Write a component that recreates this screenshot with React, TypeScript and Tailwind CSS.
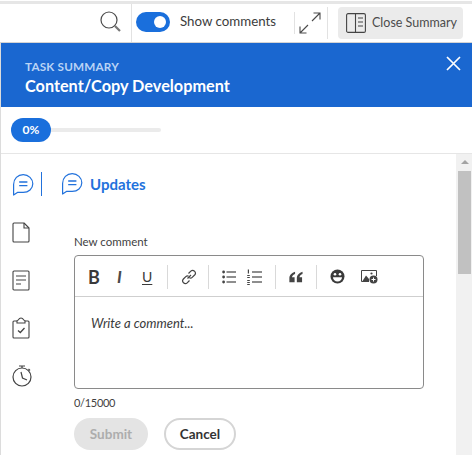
const BubbleIcon = () => (
  <svg width="22" height="23" viewBox="0 0 22 23" fill="none" stroke="#2272dc" strokeWidth="1.2">
    <path d="M1.6 22V11.5C1.6 5.8 5.8 1.6 11.2 1.6C16.6 1.6 20.8 5.8 20.8 10.8C20.8 15.8 16.6 19.4 11.2 19.4H5.4Z" strokeLinejoin="round" />
    <path d="M7.2 9H15.4M7.2 12.6H15.4" strokeWidth="1.4" />
  </svg>
);

const ToolDivider = () => <div className="w-px h-6 bg-[#d9d9d9]" />;

const ToolbarIcons = () => (
  <div className="flex items-center h-[41px] border-b border-[#cfcfcf] pl-[13px] pt-px text-[#3a3a3a]">
    <span className="w-[15px] text-[18px] font-bold leading-none">B</span>
    <span className="w-[9px] ml-[14px] text-[17px] italic font-bold leading-none text-[#4a4a4a]">I</span>
    <span className="ml-[16px] w-[13px] text-[14px] leading-none underline underline-offset-2">U</span>
    <div className="ml-[12px]"><ToolDivider /></div>
    <svg className="ml-[13px]" width="16" height="16" viewBox="0 0 16 16" fill="none" stroke="#444" strokeWidth="1.2">
      <path d="M6.5 9.5L10 6M7.5 4.5L9.8 2.2C10.8 1.2 12.4 1.2 13.5 2.2C14.6 3.3 14.6 4.9 13.6 6L11.2 8.4C10.4 9.2 9.2 9.3 8.4 8.8" />
      <path d="M8.5 11.5L6.2 13.8C5.2 14.8 3.6 14.8 2.5 13.8C1.4 12.7 1.4 11.1 2.4 10L4.8 7.6C5.6 6.8 6.8 6.7 7.6 7.2" />
    </svg>
    <div className="ml-[11px]"><ToolDivider /></div>
    <svg className="ml-[13px]" width="14" height="14" viewBox="0 0 14 14" fill="#444">
      <circle cx="1.6" cy="2" r="1.4" /><circle cx="1.6" cy="7" r="1.4" /><circle cx="1.6" cy="12" r="1.4" />
      <rect x="4.5" y="1.4" width="9.5" height="1.2" /><rect x="4.5" y="6.4" width="9.5" height="1.2" /><rect x="4.5" y="11.4" width="9.5" height="1.2" />
    </svg>
    <svg className="ml-[11px]" width="15" height="16" viewBox="0 0 15 16" fill="#444">
      <rect x="0.8" y="0.5" width="1.2" height="4" /><rect x="0.2" y="6" width="2.6" height="1" /><rect x="0.2" y="8" width="2.6" height="1" /><rect x="0.2" y="11" width="2.6" height="1" /><rect x="0.2" y="13" width="2.6" height="1" /><rect x="0.2" y="15" width="2.6" height="1" />
      <rect x="5" y="2.4" width="10" height="1.2" /><rect x="5" y="7.4" width="10" height="1.2" /><rect x="5" y="12.4" width="10" height="1.2" />
    </svg>
    <div className="ml-[13px]"><ToolDivider /></div>
    <svg className="ml-[13px]" width="14" height="12" viewBox="0 0 15 12" fill="#444">
      <path d="M6.5 0.4C3 1.6 0.4 3.8 0.4 7.4V11.6H6V6.2H3.2C3.4 4.6 4.8 3.4 6.5 2.8Z" />
      <path d="M14.5 0.4C11 1.6 8.4 3.8 8.4 7.4V11.6H14V6.2H11.2C11.4 4.6 12.8 3.4 14.5 2.8Z" />
    </svg>
    <div className="ml-[13px]"><ToolDivider /></div>
    <svg className="ml-[13px]" width="15" height="15" viewBox="0 0 15 15">
      <circle cx="7.5" cy="7.5" r="7" fill="#3a3a3a" />
      <circle cx="5" cy="5.2" r="1.3" fill="#fff" /><circle cx="10" cy="5.2" r="1.3" fill="#fff" />
      <path d="M3 8.2H12C12 10.8 10 12.4 7.5 12.4C5 12.4 3 10.8 3 8.2Z" fill="#fff" />
    </svg>
    <svg className="ml-[16px]" width="17" height="15" viewBox="0 0 17 15">
      <path d="M0.5 1.5H15.5V7" fill="none" stroke="#444" strokeWidth="1" />
      <path d="M0.5 1.5V12.5H8" fill="none" stroke="#444" strokeWidth="1" />
      <path d="M1.5 12L5 6.5L8 10L8 12Z" fill="#444" />
      <circle cx="10.5" cy="4.5" r="1.1" fill="#444" />
      <circle cx="12.5" cy="10.5" r="4" fill="#444" />
      <path d="M12.5 8.5V12.5M10.5 10.5H14.5" stroke="#fff" strokeWidth="1" />
    </svg>
  </div>
);

export default function App() {
  return (
    <div className="w-[472px] h-[455px] overflow-hidden flex flex-col bg-white font-['Lato',sans-serif]">
      {/* top bar */}
      <div className="h-[42px] shrink-0 flex items-center border-t-[3px] border-b border-t-[#e6e6e6] border-b-[#d4d4d4] mt-px">
        <svg className="ml-[100px] -mt-[3px]" width="21" height="21" viewBox="0 0 21 21" fill="none" stroke="#4b4b4b">
          <circle cx="9" cy="9" r="8" strokeWidth="1.2" />
          <path d="M15 15L20 20" strokeWidth="2.2" stroke="#777" />
        </svg>
        <div className="ml-[10px] w-px h-full bg-[#e2e2e2]" />
        <div className="ml-1 w-[34px] h-5 rounded-full bg-[#1a6fdc] flex items-center justify-end pr-[4px] -mt-[3px]">
          <div className="w-3 h-3 rounded-full bg-white" />
        </div>
        <span className="ml-[10px] w-[114px] text-[13.3px] leading-none text-[#3c3c3c] -mt-[3px]">Show comments</span>
        <div className="w-px h-[22px] bg-[#e2e2e2]" />
        <svg className="ml-[4px]" width="22" height="22" viewBox="0 0 22 22" fill="none" stroke="#4a4a4a" strokeWidth="1.1">
          <path d="M21 1L13 9M14.5 1H21V7.5M1 21L9 13M1 14.5V21H7.5" />
        </svg>
        <div className="ml-[6px] w-px h-8 bg-[#e2e2e2]" />
        <div className="ml-[10px] w-[125px] h-8 rounded bg-[#ebebeb] flex items-center pl-2">
          <svg width="20" height="20" viewBox="0 0 20 20" fill="none" stroke="#444" strokeWidth="1.1">
            <rect x="0.6" y="0.6" width="18.8" height="18.8" rx="1.5" />
            <path d="M9.5 0.6V19.4M12 5H17M12 9H17M12 13H17" />
          </svg>
          <span className="ml-[6px] text-[12.5px] leading-none text-[#4b4b4b] whitespace-nowrap">Close Summary</span>
        </div>
      </div>

      {/* panel */}
      <div className="flex-1 min-h-0 flex flex-col border-l border-[#dcdcdc]">
        <div className="h-[64px] shrink-0 bg-[#1a67d0] flex justify-between pl-6 pr-[11px] pt-[15px]">
          <div>
            <div className="text-[11.7px] leading-4 font-bold tracking-[0.2px] text-[#b9d3f5]">TASK SUMMARY</div>
            <div className="mt-px text-[16.25px] leading-[22px] font-bold text-white">Content/Copy Development</div>
          </div>
          <svg className="-mt-[2px]" width="15" height="15" viewBox="0 0 15 15" stroke="#fff" strokeWidth="1.7">
            <path d="M1 1L14 14M14 1L1 14" />
          </svg>
        </div>

        <div className="h-[47px] shrink-0 flex items-start pt-[11px] pl-[10px] border-b border-[#e6e6e6]">
          <div className="w-10 h-6 rounded-full bg-[#1a6fdc] text-white text-[12px] font-bold flex items-center justify-center">0%</div>
          <div className="w-[110px] h-1 mt-[10px] rounded-r-full bg-[#ebebeb]" />
        </div>

        <div className="flex-1 min-h-0 flex">
          <div className="w-[60px] shrink-0 pl-[11px] pt-[18px] flex flex-col">
            <div className="w-[30px] h-6 flex items-center border-r border-[#2272dc]"><BubbleIcon /></div>
            <svg className="mt-[26px]" width="18" height="21" viewBox="0 0 18 21" fill="none" stroke="#444" strokeWidth="1.1">
              <path d="M4 1H12L17 6V19C17 19.6 16.6 20 16 20H2C1.4 20 1 19.6 1 19V2C1 1.4 1.4 1 2 1H4Z" strokeLinejoin="round" />
              <path d="M12 1V6H17" />
            </svg>
            <svg className="mt-[27px]" width="18" height="21" viewBox="0 0 18 21" fill="none" stroke="#444" strokeWidth="1.1">
              <rect x="1" y="1" width="16" height="19" rx="1" />
              <path d="M4 6H14M4 10H14M4 14H9" />
            </svg>
            <svg className="mt-[26px]" width="18" height="22" viewBox="0 0 18 22" fill="none" stroke="#444" strokeWidth="1.1">
              <path d="M5 4H2C1.4 4 1 4.4 1 5V20C1 20.6 1.4 21 2 21H16C16.6 21 17 20.6 17 20V5C17 4.4 16.6 4 16 4H13" />
              <path d="M5 6V4C6 4 6.6 1 9 1C11.4 1 12 4 13 4V6Z" />
              <path d="M6 13.5L8.3 15.5L12.5 11" strokeWidth="1.3" />
            </svg>
            <svg className="mt-[26px]" width="20" height="22" viewBox="0 0 20 22" fill="none" stroke="#444" strokeWidth="1.2">
              <circle cx="10" cy="12" r="9" />
              <path d="M7 1H13M10 1V3M16.5 4L18 5.5M9 7L10.5 13L15 15" />
            </svg>
          </div>

          <div className="flex-1 min-w-0">
            <div className="pt-[18px] h-[48px] flex items-start">
              <BubbleIcon />
              <span className="ml-[7px] text-[15px] leading-[24px] font-bold text-[#2272dc]">Updates</span>
            </div>
            <div className="ml-[13px] w-[350px] mt-[32px]">
              <div className="text-[11.5px] leading-4 text-[#3f3f3f]">New comment</div>
              <div className="mt-[5px] h-[134px] border border-[#8a8a8a] rounded">
                <ToolbarIcons />
                <div className="pl-4 pt-[16px] text-[13px] leading-5 italic text-[#3a3a3a]">Write a comment...</div>
              </div>
              <div className="mt-[6px] text-[11px] leading-4 tracking-[-0.3px] text-[#3f3f3f]">0/15000</div>
              <div className="mt-[7px] flex gap-4">
                <div className="w-[74px] h-8 rounded-full bg-[#e4e4e4] text-[#adadad] text-[13.5px] font-bold flex items-center justify-center">Submit</div>
                <div className="w-[72px] h-8 rounded-full border-2 border-[#d5d5d5] text-[#333] text-[13.5px] font-bold flex items-center justify-center">Cancel</div>
              </div>
            </div>
          </div>

          {/* scrollbar */}
          <div className="w-[16px] shrink-0 bg-[#f1f1f1] pl-[2px] flex flex-col">
            <div className="h-[17px] pl-[3px] pt-[6px]">
              <div className="w-0 h-0 border-l-[4px] border-r-[4px] border-b-[4px] border-l-transparent border-r-transparent border-b-[#a3a3a3]" />
            </div>
            <div className="w-[13px] h-[103px] bg-[#c1c1c1]" />
          </div>
        </div>
      </div>
    </div>
  );
}
